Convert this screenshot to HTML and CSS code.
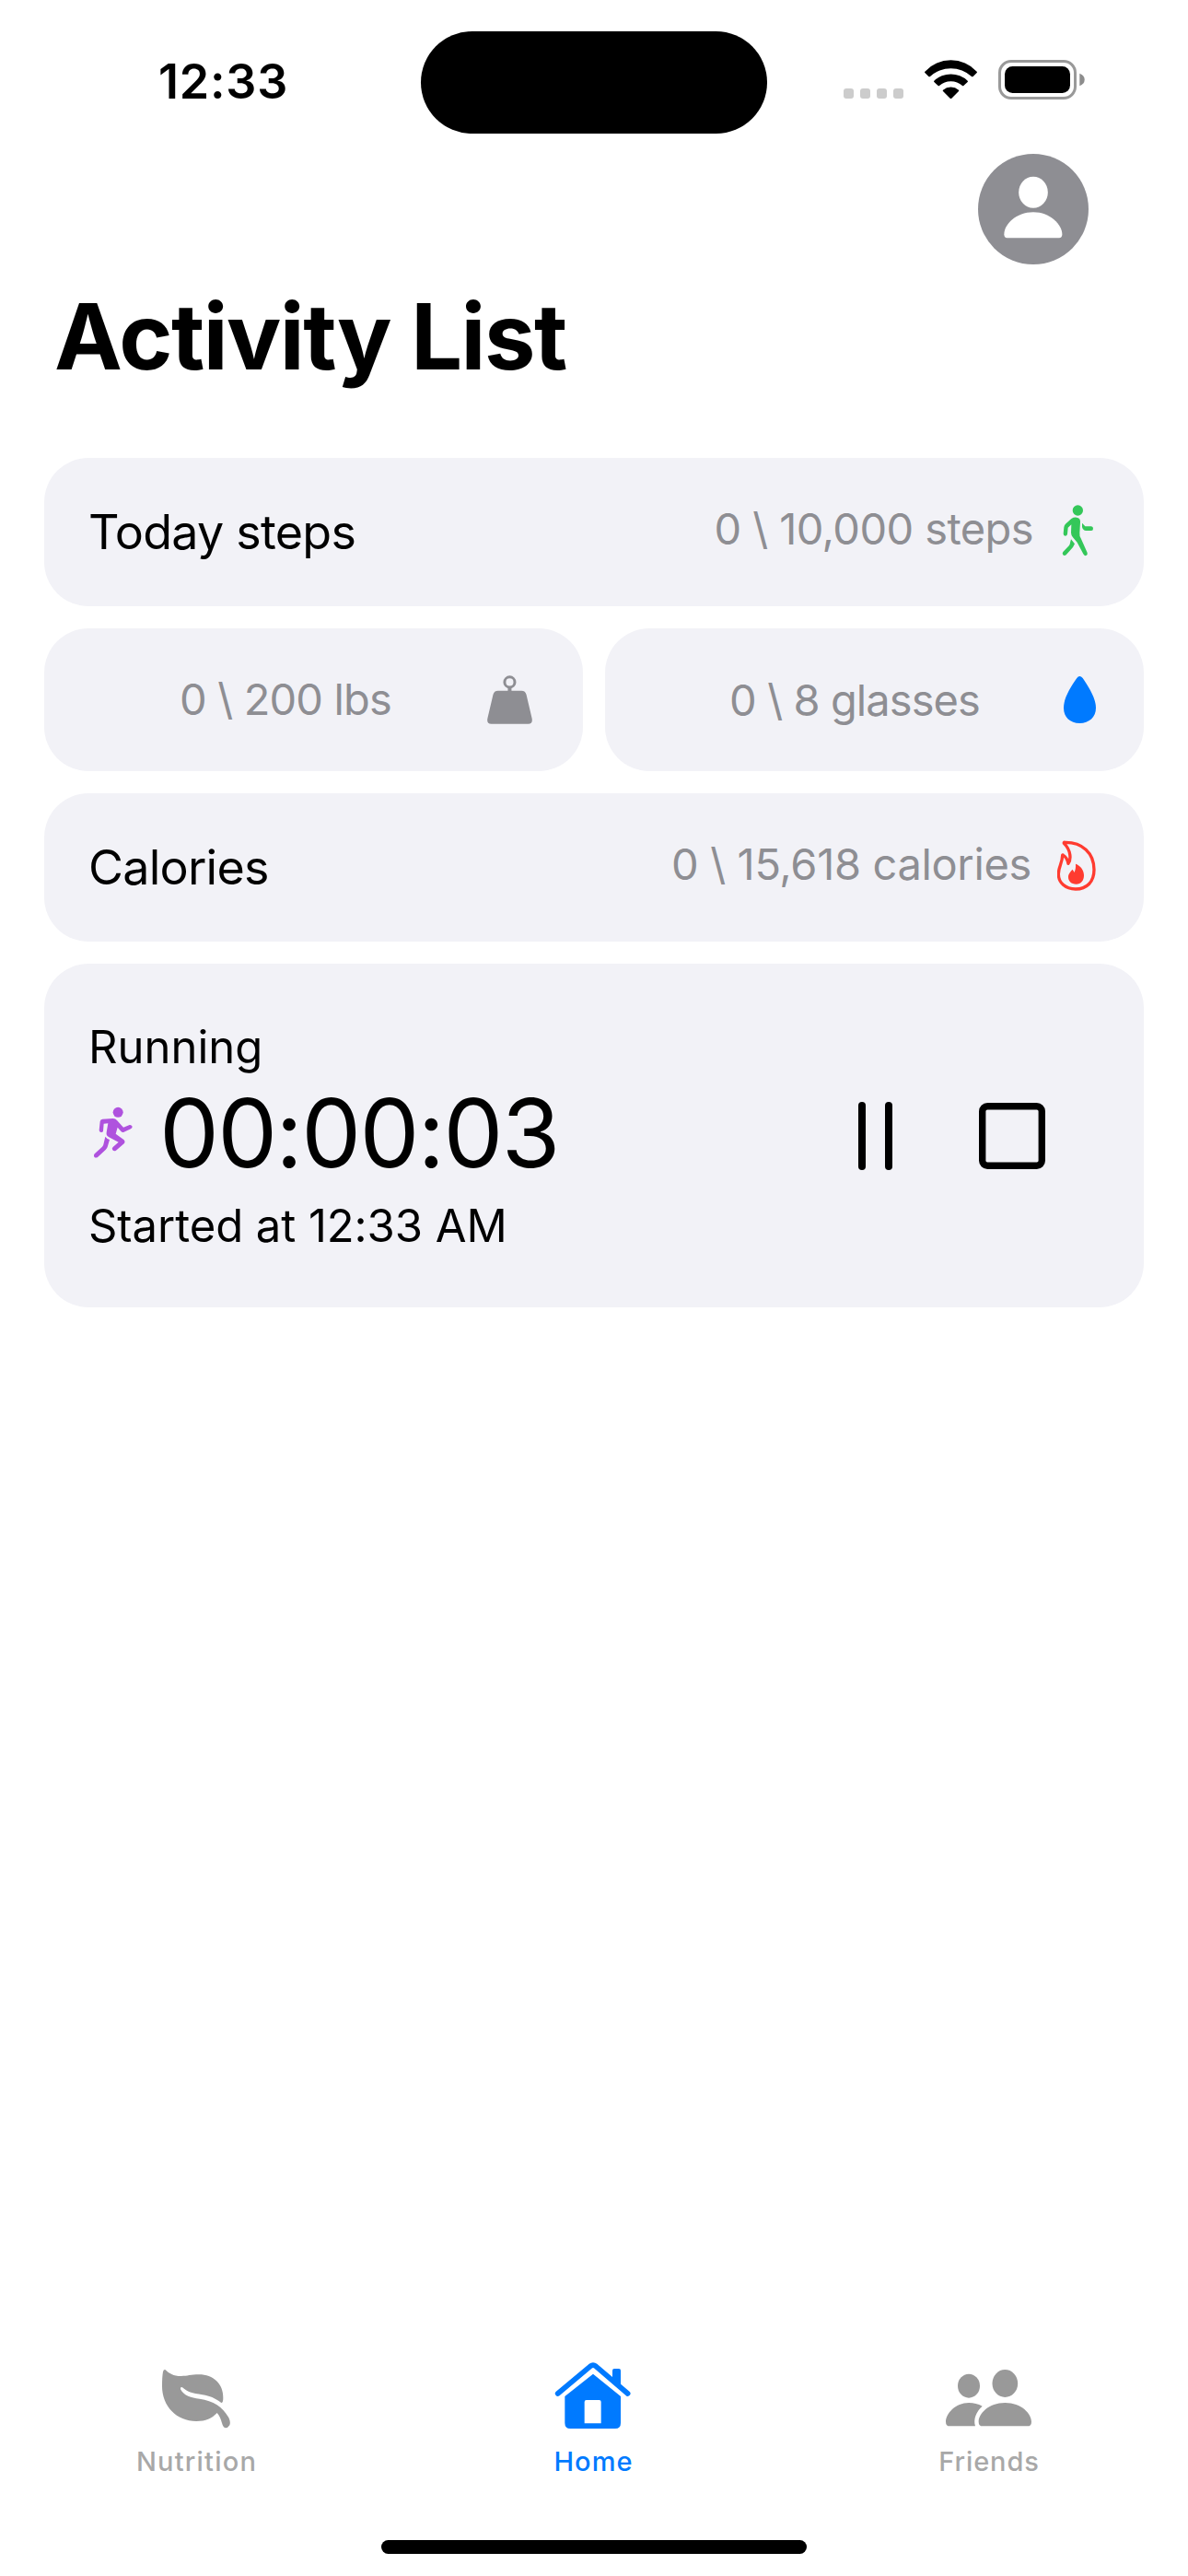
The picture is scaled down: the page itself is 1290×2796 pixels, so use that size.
FILE: index.html
```html
<!DOCTYPE html>
<html lang="en">
<head>
<meta charset="utf-8">
<title>Activity List</title>
<link rel="stylesheet" href="styles.css">
</head>
<body>
<div class="screen">
  <header class="status-bar">
    <span class="clock">12:33</span>
    <div class="island"></div>
    <div class="indicators">
      <svg class="cellular" viewBox="0 0 65 11"><rect width="11" height="11" rx="3"/><rect x="18" width="11" height="11" rx="3"/><rect x="36" width="11" height="11" rx="3"/><rect x="54" width="11" height="11" rx="3"/></svg>
      <svg class="wifi" viewBox="342 75 171 129">
        <path d="M343 113A115 115 0 0 1 512 113Q514 115 512 117L500 129Q497 131 495 129A99 99 0 0 0 360 129Q358 131 355 129L343 117Q341 115 343 113Z"/>
        <path d="M373 143A79 79 0 0 1 482 143Q484 145 482 147L469 159Q467 161 465 159A56 56 0 0 0 390 159Q388 161 386 159L373 147Q371 145 373 143Z"/>
        <path d="M402 173A40 40 0 0 1 453 173Q455 175 453 177L430 200Q428 202 425 200L402 177Q400 175 402 173Z"/>
      </svg>
      <svg class="battery" viewBox="0 0 94 43"><rect class="shell" x="1.5" y="1.5" width="82" height="40" rx="12.5"/><rect x="7" y="7" width="71" height="29" rx="8.5"/><path class="nub" d="M88.3 14.8Q93.7 17 93.7 21.5T88.3 28.2Z"/></svg>
    </div>
  </header>

  <div class="profile-row">
    <svg class="avatar" viewBox="516 380 360 360"><circle cx="696" cy="560" r="180"/><g class="cutout"><ellipse cx="696" cy="505" rx="47.5" ry="51"/><path d="M601 642C601 610 640 570 696 570C752 570 790 612 790 642Q790 654 780 654H611Q601 654 601 642Z"/></g></svg>
  </div>

  <h1 class="title">Activity List</h1>

  <main class="cards">
    <section class="card">
      <span class="name">Today steps</span>
      <span class="value raised steps">0 \ 10,000 steps</span>
      <svg class="icon walk" viewBox="204 82 132 168">
        <circle cx="271" cy="100" r="17"/>
        <path d="M250 127Q258 122 267 123Q280 125 279 138L277 173Q276 184 281 191L302 238Q304 245 298 247Q292 249 289 242L269 204L255 188Q249 181 249 173L250 146L239 156L237 177Q236 183 230 183Q224 183 224 176L226 155Q227 148 231 144Z"/>
        <path d="M285 141L295 152H315Q321 153 321 159Q321 166 315 166H297Q291 166 288 161Q285 157 285 153Z"/>
        <path d="M249 194L261 209L255 220L233 245Q227 249 223 245Q219 241 223 235L243 214Q246 210 246 205Z"/>
      </svg>
    </section>

    <div class="pair">
      <section class="card small weight">
        <span class="value lbs">0 \ 200 lbs</span>
        <svg class="kettle" viewBox="0 0 49.5 53"><circle class="ring" cx="24.7" cy="7.2" r="5.6"/><path d="M22.7 12.5H26.7V18H22.7ZM12 16.7H37.5Q42 16.7 43 21L49 46.5Q50.5 53 45 53H4.5Q-1 53 .5 46.5L6.5 21Q7.5 16.7 12 16.7Z"/></svg>
      </section>
      <section class="card small water">
        <span class="value glasses">0 \ 8 glasses</span>
        <svg class="drop" viewBox="225 642 105 153"><path d="M277 642Q282 642 287 648C305 675 330 712 330 745C330 776 308 795 277 795C246 795 225 776 225 745C225 712 249 675 268 648Q272 642 277 642Z"/></svg>
      </section>
    </div>

    <section class="card">
      <span class="name">Calories</span>
      <span class="value raised calories">0 \ 15,618 calories</span>
      <svg class="icon flame" viewBox="204 1174 132 168">
        <path class="outline" d="M229 1181C285 1180 324 1215 324 1270C324 1310 300 1333 264 1333C230 1333 208 1312 208 1284C208 1260 221 1248 221 1223Q222 1221 224 1223Q236 1230 240 1250C249 1238 250 1207 226 1184Q225 1180 229 1181Z"/>
        <path d="M265 1251C281 1258 291 1272 291 1288C291 1306 281 1317 266 1317C250 1317 240 1307 240 1294C240 1282 248 1277 253 1269Q258 1273 259 1279C263 1273 265 1262 264 1252Z"/>
      </svg>
    </section>

    <section class="card workout">
      <div class="details">
        <div class="line kind">Running</div>
        <div class="timer">
          <svg class="runner" viewBox="64 63 132 168">
            <circle cx="145.500" cy="82" r="16.500"/>
            <path d="M95 104L129 102Q137 102 142 108L163 131L183 123Q189 122 192 128Q192 133 187 136L163 147Q159 148 156 145L144 131L138 152L163 170Q171 176 165 184L139 206Q133 210 128 205Q124 199 129 195L147 179L116 163Q106 158 108 147L113 118L99 119L97 143Q95 148 90 147Q84 146 84 140L87 112Q88 105 95 104Z"/>
            <path d="M104 161Q109 168 118 171L111 195Q109 200 105 204L80 227Q73 232 68 227Q65 221 70 216L94 194Q97 191 98 187Z"/>
          </svg>
          <span class="elapsed">00:00:03</span>
        </div>
        <div class="line since">Started at 12:33 AM</div>
      </div>
      <div class="controls">
        <svg class="pause" viewBox="0 0 37 74"><rect width="8" height="74" rx="4"/><rect x="29" width="8" height="74" rx="4"/></svg>
        <svg class="stop" viewBox="0 0 72 72"><rect x="3.700" y="3.700" width="64.600" height="64.600" rx="5.500"/></svg>
      </div>
    </section>
  </main>

  <nav class="tabs">
    <div class="tab nutrition">
      <svg viewBox="135 60 300 240"><path d="M178 96C192 109 204 117 230 117C250 117 262 112 288 112C335 112 368 143 367 188Q367 204 361 204C338 188 325 182 300 178C265 173 250 168 234 154Q227 151 228 160C240 182 262 188 290 191C335 197 365 217 385 252Q392 268 388 277Q383 286 374 286Q367 285 363 270Q357 247 347 237C330 255 310 264 280 264C215 264 168 215 168 150C168 130 169 115 171 103Q173 95 178 96Z"/></svg>
      <span class="label">Nutrition</span>
    </div>
    <div class="tab home">
      <svg viewBox="105 60 300 240"><path class="roof" d="M137 174L243 85Q252 78 261 85L365 174"/><path d="M315 140V99Q315 93 321 93H336Q342 93 342 99V158ZM252 110L342 183V270Q342 288 324 288H178Q160 288 160 270V183Z"/><path class="door" d="M224 271V201Q224 195 230 195H272Q278 195 278 201V271Z"/></svg>
      <span class="label">Home</span>
    </div>
    <div class="tab friends">
      <svg viewBox="135 60 300 240"><ellipse cx="216" cy="149" rx="36" ry="39"/><ellipse cx="334" cy="141" rx="41.500" ry="45"/><path d="M248 266C248 240 280 204 334 204C388 204 420 240 420 266Q420 280 407 280H261Q248 280 248 266ZM141 266C141 240 172 204 216 204Q240 204 260 215C240 232 230 258 237 280H154Q141 280 141 266Z"/></svg>
      <span class="label">Friends</span>
    </div>
  </nav>
  <div class="home-indicator"></div>
</div>
</body>
</html>
```
FILE: styles.css
```css
* { box-sizing: border-box; }

body {
  margin: 0;
  background: #fff;
  color: #000;
  font-family: "Inter", "Liberation Sans", sans-serif;
}

svg { display: block; flex: none; fill: currentColor; }

.screen {
  display: flex;
  flex-direction: column;
  width: 1290px;
  height: 2796px;
  overflow: hidden;
}

/* Status bar */
.status-bar {
  display: grid;
  grid-template-columns: 457px 376px 1fr;
  align-items: center;
  height: 167px;
  padding-top: 10px;
}
.clock {
  padding-left: 172px;
  font-size: 52px;
  font-weight: 600;
  line-height: 60px;
  letter-spacing: 0.8px;
}
.island { height: 111px; margin-top: 1px; border-radius: 56px; background: #000; }
.indicators {
  display: flex;
  align-items: flex-end;
  padding: 0 0 4px 83px;
}
.cellular { width: 65px; height: 11px; margin: 0 23px 1px 0; color: #ccc; }
.wifi { width: 57px; height: 43px; margin-right: 23px; }
.battery { width: 94px; height: 43px; }
.shell { fill: none; stroke: #999; stroke-width: 3; }
.nub { fill: #8c8c8c; }

/* Heading */
.profile-row { display: flex; justify-content: flex-end; padding-right: 108px; }
.avatar { width: 120px; height: 120px; color: #8e8e93; }
.cutout { fill: #fff; }
.title {
  margin: 18px 0 72px;
  padding-left: 59px;
  font-size: 99px;
  font-weight: 700;
  line-height: 120px;
  letter-spacing: -1.5px;
}

/* Cards */
.cards { display: flex; flex-direction: column; gap: 24px; padding: 0 48px; }
.pair { display: grid; grid-template-columns: 1fr 1fr; gap: 24px; }
.card {
  display: flex;
  align-items: center;
  height: 161px;
  padding: 0 50px 0 48px;
  border-radius: 48px;
  background: #f2f2f7;
}
.card.small { height: 155px; justify-content: flex-end; }
.card.weight { padding-right: 55px; }
.card.water { padding-right: 52px; }
.name { font-size: 52px; line-height: 64px; letter-spacing: -0.75px; }
.value {
  color: #8e8e93;
  font-size: 47px;
  line-height: 60px;
  white-space: nowrap;
}
.raised { margin: 0 0 7px auto; }
.steps { letter-spacing: -0.58px; }
.lbs { margin-bottom: 1px; letter-spacing: -0.84px; }
.glasses { letter-spacing: -0.91px; }
.calories { letter-spacing: -0.35px; }
.icon { width: 44px; height: 56px; margin: 0 0 4px 26px; }
.walk { color: #34c759; }
.flame { margin-left: 28px; color: #ff3b30; }
.outline { fill: none; stroke: #ff3b30; stroke-width: 10; stroke-linejoin: round; }
.kettle { width: 49px; height: 53px; margin-left: 104px; color: #8e8e93; }
.ring { fill: none; stroke: #8e8e93; stroke-width: 3; }
.drop { width: 35px; height: 51px; margin-left: 91px; color: #007aff; }

/* Running workout */
.card.workout { height: 373px; padding-right: 107px; justify-content: space-between; }
.line { font-size: 49px; line-height: 60px; }
.kind { padding-top: 3px; }
.since { padding-top: 8px; letter-spacing: -0.07px; }
.timer { display: flex; align-items: center; height: 126px; }
.runner { width: 44px; height: 56px; margin: 0 28px 3px 5px; color: #af52de; }
.elapsed { font-size: 103px; line-height: 126px; letter-spacing: -1.8px; }
.controls { display: flex; align-items: center; gap: 94px; }
.pause { width: 37px; height: 74px; }
.stop { width: 72px; height: 72px; }
.stop rect { fill: none; stroke: #000; stroke-width: 7.4; }

/* Bottom navigation */
.tabs { display: grid; grid-template-columns: repeat(3, 1fr); margin-top: auto; }
.tab { display: flex; flex-direction: column; align-items: center; gap: 14px; color: #999; }
.tab svg { width: 100px; height: 80px; }
.label { font-size: 29px; font-weight: 500; line-height: 36px; color: #a8a8a8; }
.nutrition .label { margin-right: 3px; letter-spacing: 1.21px; }
.friends .label { margin-right: 2px; letter-spacing: 0.89px; }
.home .label { margin-right: 1px; color: #007aff; letter-spacing: 1.04px; }
.home { color: #007aff; }
.roof { fill: none; stroke: #007aff; stroke-width: 17; stroke-linecap: round; stroke-linejoin: round; }
.door { fill: #fff; }

.home-indicator {
  width: 462px;
  height: 15px;
  margin: 67px auto 24px;
  border-radius: 8px;
  background: #000;
}
```
